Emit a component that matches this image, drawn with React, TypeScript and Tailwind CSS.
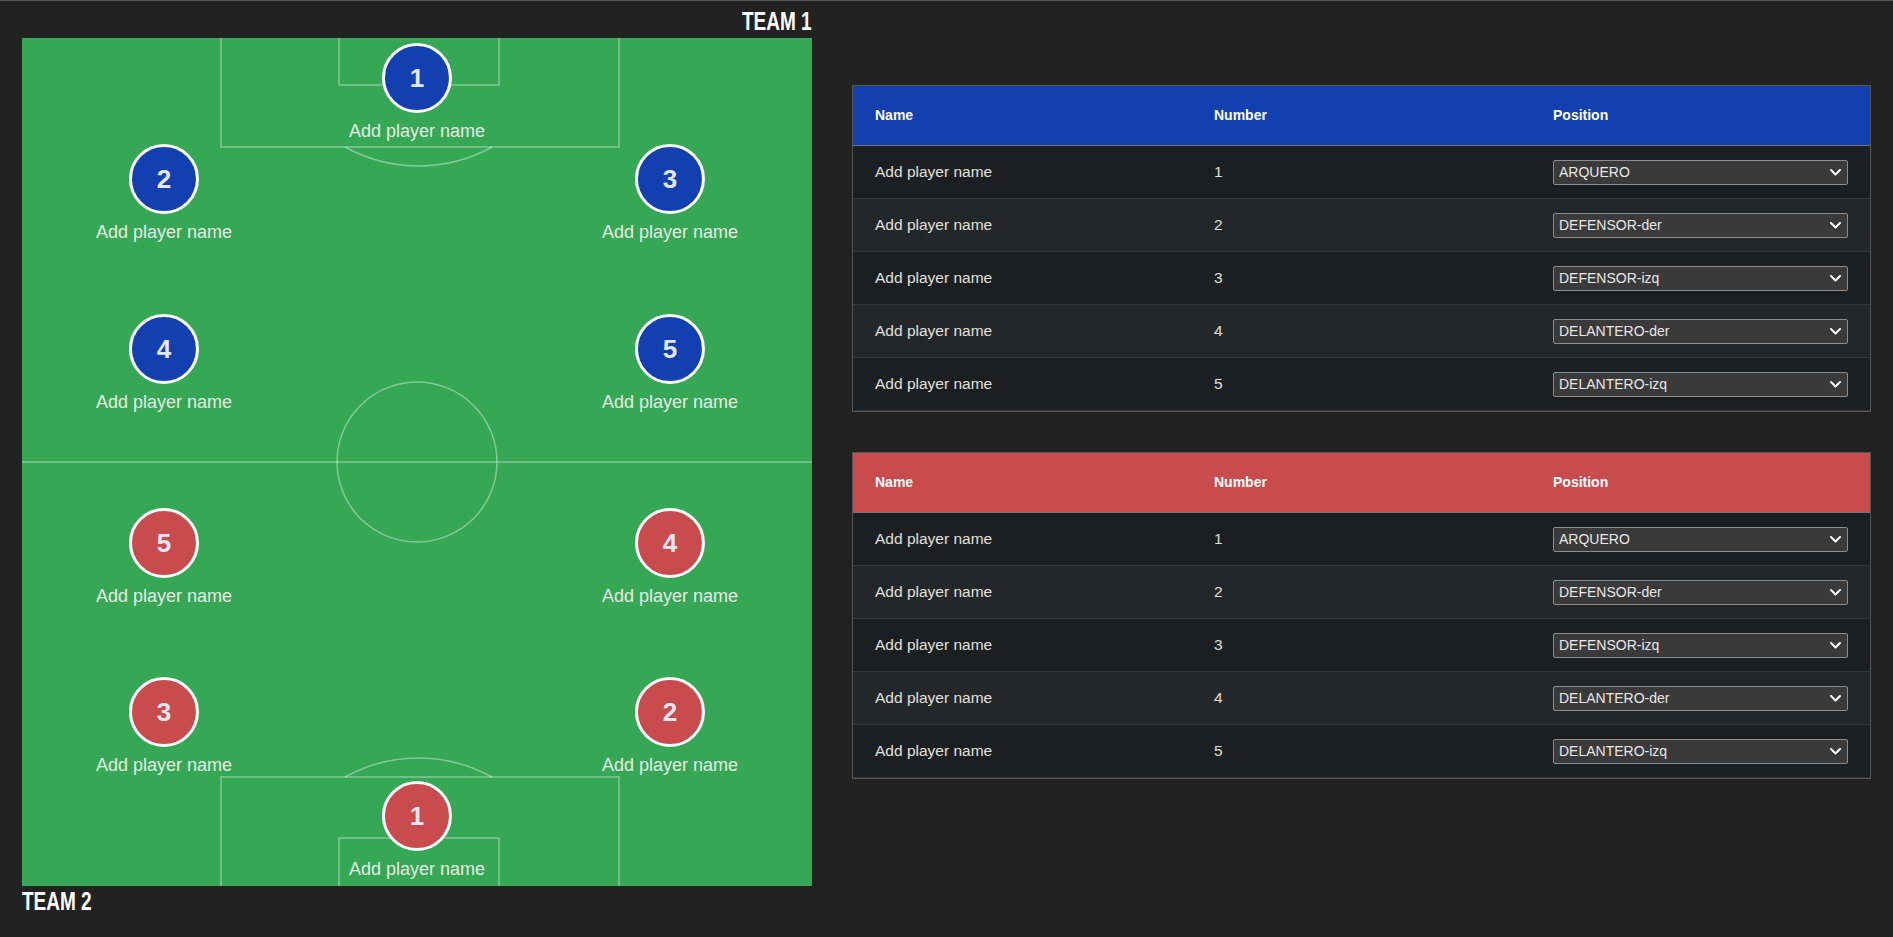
import React from 'react';

type Player = { n: number; pos: string };

const blueTeam: Player[] = [
  { n: 1, pos: 'left-[395px] top-[5px]' },
  { n: 2, pos: 'left-[142px] top-[106px]' },
  { n: 3, pos: 'left-[648px] top-[106px]' },
  { n: 4, pos: 'left-[142px] top-[276px]' },
  { n: 5, pos: 'left-[648px] top-[276px]' },
];

const redTeam: Player[] = [
  { n: 5, pos: 'left-[142px] top-[470px]' },
  { n: 4, pos: 'left-[648px] top-[470px]' },
  { n: 3, pos: 'left-[142px] top-[639px]' },
  { n: 2, pos: 'left-[648px] top-[639px]' },
  { n: 1, pos: 'left-[395px] top-[743px]' },
];

const positions = ['ARQUERO', 'DEFENSOR-der', 'DEFENSOR-izq', 'DELANTERO-der', 'DELANTERO-izq'];

function Marker({ player, color }: { player: Player; color: string }) {
  return (
    <div className={`absolute -translate-x-1/2 flex flex-col items-center ${player.pos}`}>
      <div
        className={`w-[70px] h-[70px] rounded-full border-[3px] border-white flex items-center justify-center text-[26px] font-bold text-[#e4e6f2] ${color}`}
      >
        {player.n}
      </div>
      <span className="mt-[7px] text-[18px] leading-[22px] text-[#e2efe3] whitespace-nowrap">
        Add player name
      </span>
    </div>
  );
}

function Pitch() {
  return (
    <div className="relative w-[790px] h-[848px] bg-[#36a855]">
      <svg className="absolute inset-0" width="790" height="848" viewBox="0 0 790 848" fill="none">
        <g stroke="rgba(255,255,255,0.38)" strokeWidth="1.5">
          <rect x="199" y="-1" width="398" height="110" />
          <rect x="317" y="-1" width="160" height="48" />
          <path d="M323 109 A152 152 0 0 0 470 109" />
          <line x1="0" y1="424" x2="790" y2="424" />
          <circle cx="395" cy="424" r="80" />
          <rect x="199" y="739" width="398" height="112" />
          <rect x="317" y="800" width="160" height="51" />
          <path d="M323 739 A152 152 0 0 1 470 739" />
        </g>
      </svg>
      {blueTeam.map(p => (
        <Marker key={'b' + p.n} player={p} color="bg-[#1240b1]" />
      ))}
      {redTeam.map(p => (
        <Marker key={'r' + p.n} player={p} color="bg-[#c84b4e]" />
      ))}
    </div>
  );
}

function Roster({ header }: { header: string }) {
  return (
    <div className="border border-[#555] bg-[#1c1f22]">
      <div className={`grid grid-cols-3 h-[60px] items-center border-b border-[#6f757c] text-[14px] font-bold text-white ${header}`}>
        <div className="px-[22px]">Name</div>
        <div className="px-[22px]">Number</div>
        <div className="px-[22px]">Position</div>
      </div>
      {positions.map((pos, i) => (
        <div
          key={pos}
          className={`grid grid-cols-3 h-[53px] items-center border-b border-[#33383d] text-[15.5px] text-[#e0e0dc] ${
            i % 2 === 1 ? 'bg-[#24272a]' : 'bg-[#1c1f22]'
          }`}
        >
          <div className="px-[22px]">Add player name</div>
          <div className="px-[22px]">{i + 1}</div>
          <div className="px-[22px]">
            <div className="relative">
              <select
                defaultValue={pos}
                className="appearance-none w-full h-[25px] bg-[#3a3a3a] border border-[#8c8c8c] rounded-[2px] pl-[5px] text-[14px] text-[#e8e8e8] outline-none"
              >
                {positions.map(o => (
                  <option key={o} value={o}>
                    {o}
                  </option>
                ))}
              </select>
              <svg
                className="absolute right-[7px] top-[9px] pointer-events-none"
                width="11"
                height="7"
                viewBox="0 0 11 7"
                fill="none"
              >
                <path d="M1 1l4.5 4.5L10 1" stroke="#fff" strokeWidth="2" strokeLinecap="round" strokeLinejoin="round" />
              </svg>
            </div>
          </div>
        </div>
      ))}
    </div>
  );
}

export default function App() {
  return (
    <div
      className="min-h-screen bg-[#222222] border-t border-[#5a5a5a] flex"
      style={{ fontFamily: '"Liberation Sans", Arial, sans-serif' }}
    >
      <div className="pl-[22px] w-[812px] shrink-0">
        <div className="h-[37px] flex items-end justify-end pb-[4px]">
          <span className="inline-block origin-right scale-x-[0.76] text-[25px] leading-[25px] font-bold text-white">
            TEAM 1
          </span>
        </div>
        <Pitch />
        <div className="mt-[3px]">
          <span className="inline-block origin-left scale-x-[0.76] text-[25px] leading-[25px] font-bold text-white">
            TEAM 2
          </span>
        </div>
      </div>
      <div className="ml-[40px] w-[1019px] shrink-0 pt-[84px] flex flex-col gap-[40px]">
        <Roster header="bg-[#1240b1]" />
        <Roster header="bg-[#c84b4e]" />
      </div>
    </div>
  );
}
